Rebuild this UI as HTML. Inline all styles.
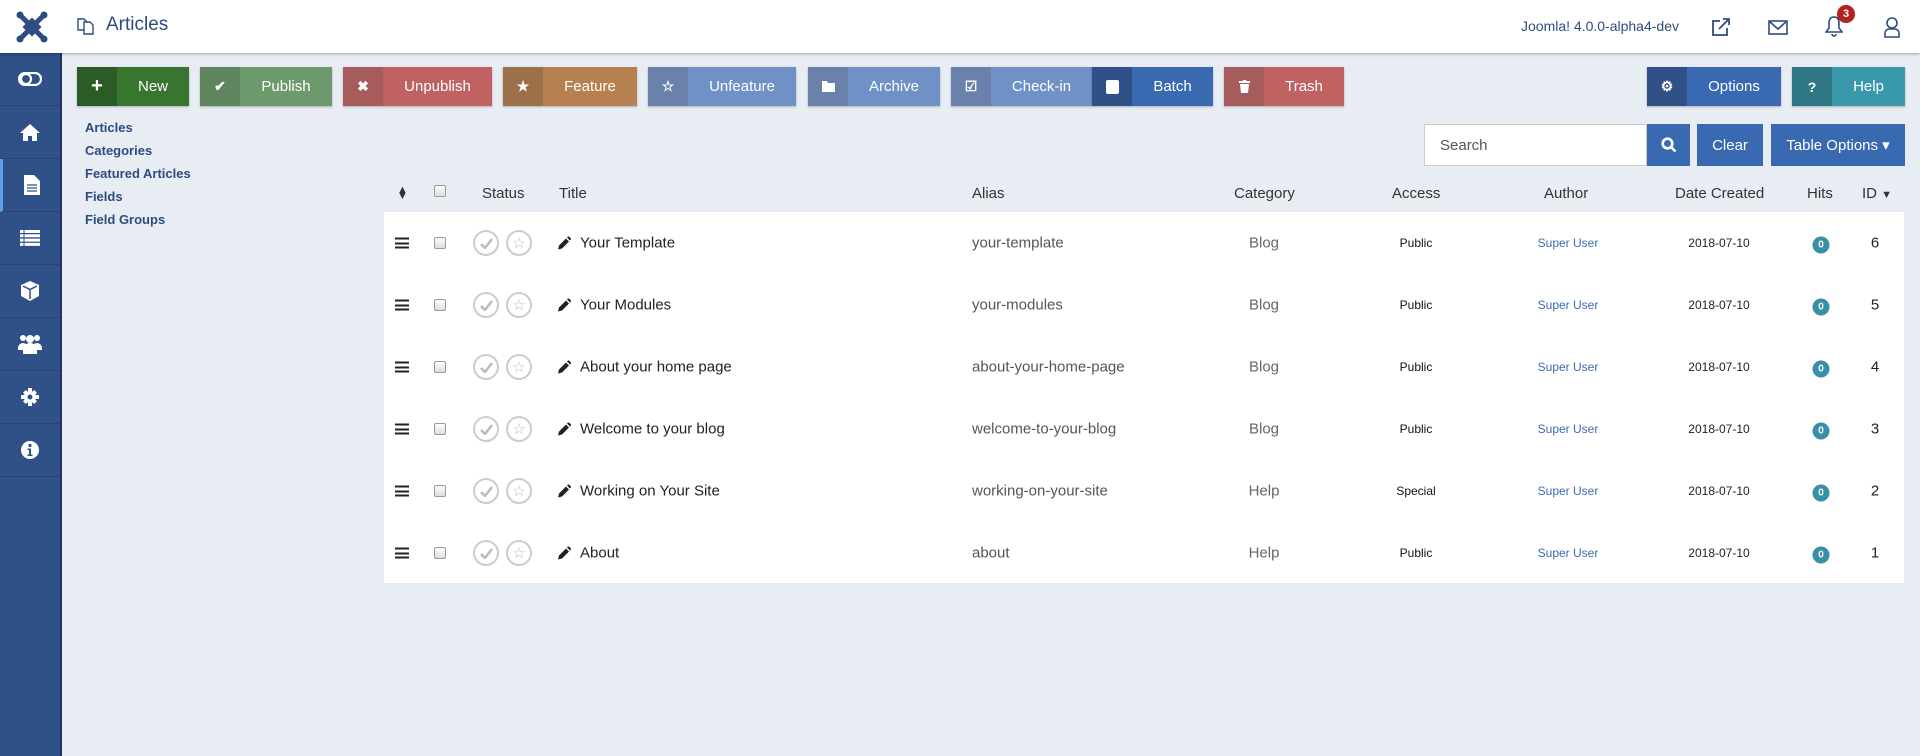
<!DOCTYPE html>
<html><head><meta charset="utf-8"><style>
*{box-sizing:border-box;margin:0;padding:0}
body{width:1920px;height:756px;overflow:hidden;background:#e8ecf3;font-family:"Liberation Sans",Arial,sans-serif;position:relative;color:#222}
.a{position:absolute}
#hdr{left:0;top:0;width:1920px;height:53px;background:#fff;box-shadow:0 1px 3px rgba(0,0,0,.3);z-index:2}
#sb{left:0;top:53px;width:62px;height:703px;background:#2f5188;border-right:2px solid #1f3560}
.si{position:absolute;left:0;width:60px;height:53px;border-bottom:1px solid #274374;display:flex;align-items:center;justify-content:center}
.btn{position:absolute;top:67px;height:39px;display:flex;color:#fff;font-size:15px;box-shadow:0 1px 2px rgba(0,0,0,.25)}
.btn .ic{width:40px;display:flex;align-items:center;justify-content:center;font-size:14px;font-weight:bold}
.btn .tx{flex:1;display:flex;align-items:center;justify-content:center}
.sub{left:85px;font-size:13px;font-weight:bold;color:#2d4d80}
.th{top:185px;font-size:15px;color:#333}
.row{position:absolute;left:384px;width:1520px;height:62px}
.c{position:absolute;top:50%;transform:translateY(-50%);white-space:nowrap}
.cc{position:absolute;top:50%;transform:translate(-50%,-50%);white-space:nowrap}
.cb{width:12px;height:12px;border:1px solid #999;border-radius:2px;background:linear-gradient(#fff,#ddd)}
.circ{width:26px;height:26px;border:2px solid #ccc;border-radius:50%;display:flex;align-items:center;justify-content:center}
.badge{width:17px;height:17px;border-radius:50%;background:#3a8fa8;color:#fff;font-size:10px;font-weight:bold;display:flex;align-items:center;justify-content:center}
</style></head><body>
<div id="hdr" class="a">
 <svg class="a" style="left:16px;top:11px" width="32" height="32" viewBox="0 0 32 32" fill="none" stroke="#2d4d80" stroke-width="5" stroke-linecap="round"><path d="M5 5 L27 27 M27 5 L5 27 M10 16 L16 10 L22 16 L16 22 Z"/><circle cx="4" cy="4" r="3.5" fill="#2d4d80" stroke="none"/><circle cx="28" cy="4" r="3.5" fill="#2d4d80" stroke="none"/><circle cx="4" cy="28" r="3.5" fill="#2d4d80" stroke="none"/><circle cx="28" cy="28" r="3.5" fill="#2d4d80" stroke="none"/></svg>
 <svg class="a" style="left:77px;top:16px" width="19" height="19" viewBox="0 0 19 19" fill="#fff" stroke="#2d4d80" stroke-width="1.4"><path d="M1 3h6l3 3v8H1z"/><path d="M7 6h6l3 3v9H7z"/></svg>
 <div class="a" style="left:106px;top:14px;font-size:19px;color:#2d4d80">Articles</div>
 <div class="a" style="left:1521px;top:18px;font-size:14px;color:#2d4d80">Joomla! 4.0.0-alpha4-dev</div>
 <svg class="a" style="left:1711px;top:17px" width="20" height="20" viewBox="0 0 20 20" fill="none" stroke="#2d4d80" stroke-width="1.8"><path d="M9 4H2v14h14v-7"/><path d="M8 12L18 2M12 2h6v6"/></svg>
 <svg class="a" style="left:1768px;top:20px" width="20" height="15" viewBox="0 0 20 15" fill="none" stroke="#2d4d80" stroke-width="1.6"><rect x="1" y="1" width="18" height="13"/><path d="M1 1l9 8 9-8"/></svg>
 <svg class="a" style="left:1825px;top:15px" width="18" height="22" viewBox="0 0 18 22" fill="none" stroke="#2d4d80" stroke-width="1.6"><path d="M9 2c-4 0-5 3-5 6v5l-3 4h16l-3-4V8c0-3-1-6-5-6zM7 19a2 2 0 004 0"/></svg>
 <div class="a" style="left:1837px;top:5px;width:18px;height:18px;border-radius:50%;background:#b22222;color:#fff;font-size:11px;font-weight:bold;text-align:center;line-height:18px">3</div>
 <svg class="a" style="left:1883px;top:16px" width="18" height="22" viewBox="0 0 18 22" fill="none" stroke="#2d4d80" stroke-width="1.6"><circle cx="9" cy="7" r="5"/><path d="M2 21v-4a4 4 0 014-4h6a4 4 0 014 4v4z"/></svg>
</div>
<div id="sb" class="a">
 <div class="si" style="top:0"><svg width="24" height="14" viewBox="0 0 24 14" fill="none" stroke="#fff" stroke-width="2.2"><rect x="1" y="1" width="22" height="12" rx="6"/><circle cx="8" cy="7" r="5"/></svg></div>
 <div class="si" style="top:53px"><svg width="20" height="18" viewBox="0 0 20 18" fill="#fff"><path d="M10 1L0 10h3v8h5v-5h4v5h5v-8h3z"/></svg></div>
 <div class="si" style="top:106px;border-left:3px solid #5aa0f0"><svg width="16" height="20" viewBox="0 0 16 20" fill="#fff"><path d="M0 0h10l6 6v14H0z"/><path d="M3 10h10M3 13h10M3 16h10" stroke="#2f5188" stroke-width="1.3"/></svg></div>
 <div class="si" style="top:159px"><svg width="20" height="16" viewBox="0 0 20 16" fill="#fff"><path d="M0 0h20v3H0zM0 4.3h20v3H0zM0 8.6h20v3H0zM0 12.9h20v3H0z"/><path d="M4 0v16" stroke="#2f5188" stroke-width="1"/></svg></div>
 <div class="si" style="top:212px"><svg width="18" height="20" viewBox="0 0 18 20" fill="#fff"><path d="M9 0l9 4v11l-9 5-9-5V4z"/><path d="M2 5l7 3.5 7-3.5M9 8.5V18" stroke="#2f5188" stroke-width="1.5" fill="none"/></svg></div>
 <div class="si" style="top:265px"><svg width="24" height="20" viewBox="0 0 24 20" fill="#fff"><circle cx="5" cy="4" r="3"/><circle cx="19" cy="4" r="3"/><circle cx="12" cy="5" r="4"/><path d="M0 14a5 5 0 0110 0v2H0zM14 14a5 5 0 0110 0v2H14z"/><path d="M5 20v-4a7 7 0 0114 0v4z"/></svg></div>
 <div class="si" style="top:318px"><svg width="18" height="18" viewBox="0 0 18 18" fill="#fff"><circle cx="9" cy="9" r="6"/><path d="M7 0h4v4H7zM7 14h4v4H7zM0 7h4v4H0zM14 7h4v4h-4zM2 4.8L4.8 2 7 4.2 4.2 7zM11 13.8L13.8 11 16 13.2 13.2 16zM11 4.2L13.2 2 16 4.8 13.8 7zM2 13.2L4.2 11 7 13.8 4.8 16z"/><circle cx="9" cy="9" r="2.5" fill="#2f5188"/></svg></div>
 <div class="si" style="top:371px"><svg width="18" height="18" viewBox="0 0 18 18"><circle cx="9" cy="9" r="9" fill="#fff"/><circle cx="9" cy="4.5" r="1.6" fill="#2f5188"/><path d="M6.5 7.5h3.5v6h1.5v1.5h-5v-1.5h1.5V9h-1.5z" fill="#2f5188"/></svg></div>
</div>

<div class="btn" style="left:77px;width:112px;background:#38752f"><div class="ic" style="background:#2c5c25;font-size:20px">+</div><div class="tx">New</div></div>
<div class="btn" style="left:200px;width:132px;background:#6c9a6c"><div class="ic" style="background:#5e855e">✔</div><div class="tx">Publish</div></div>
<div class="btn" style="left:343px;width:149px;background:#c06262"><div class="ic" style="background:#a65c5c">✖</div><div class="tx">Unpublish</div></div>
<div class="btn" style="left:503px;width:134px;background:#b6804f"><div class="ic" style="background:#9c7048">★</div><div class="tx">Feature</div></div>
<div class="btn" style="left:648px;width:148px;background:#7091c6"><div class="ic" style="background:#6a82ab">☆</div><div class="tx">Unfeature</div></div>
<div class="btn" style="left:808px;width:132px;background:#7091c6"><div class="ic" style="background:#6a82ab"><svg width="13" height="11" viewBox="0 0 13 11" fill="#fff"><path d="M0 0h5l1 2h7v9H0z"/></svg></div><div class="tx">Archive</div></div>
<div class="btn" style="left:951px;width:141px;background:#7091c6"><div class="ic" style="background:#6a82ab">☑</div><div class="tx">Check-in</div></div>
<div class="btn" style="left:1092px;width:121px;background:#3969b1"><div class="ic" style="background:#2f5188"><div style="width:13px;height:14px;background:#fff;border-radius:2px"></div></div><div class="tx">Batch</div></div>
<div class="btn" style="left:1224px;width:120px;background:#c06262"><div class="ic" style="background:#a65c5c"><svg width="11" height="13" viewBox="0 0 11 13" fill="#fff"><path d="M0 1h11v2H0zM4 0h3v1H4zM1 4h9l-1 9H2z"/></svg></div><div class="tx">Trash</div></div>
<div class="btn" style="left:1647px;width:134px;background:#3969b1"><div class="ic" style="background:#2f5188">⚙</div><div class="tx">Options</div></div>
<div class="btn" style="left:1792px;width:113px;background:#3a98ab"><div class="ic" style="background:#2e7885">?</div><div class="tx">Help</div></div>

<div class="a sub" style="top:120px">Articles</div>
<div class="a sub" style="top:143px">Categories</div>
<div class="a sub" style="top:166px">Featured Articles</div>
<div class="a sub" style="top:189px">Fields</div>
<div class="a sub" style="top:212px">Field Groups</div>

<div class="a" style="left:1424px;top:124px;width:223px;height:42px;background:#fff;border:1px solid #ccc;font-size:15px;color:#555;padding:12px 15px">Search</div>
<div class="a" style="left:1647px;top:124px;width:43px;height:42px;background:#3969b1;display:flex;align-items:center;justify-content:center"><svg width="16" height="16" viewBox="0 0 16 16" fill="none" stroke="#fff" stroke-width="2.6"><circle cx="6.5" cy="6.5" r="4.8"/><path d="M10 10l4.5 4.5"/></svg></div>
<div class="a" style="left:1697px;top:124px;width:66px;height:42px;background:#3969b1;color:#fff;font-size:15px;display:flex;align-items:center;justify-content:center">Clear</div>
<div class="a" style="left:1771px;top:124px;width:134px;height:42px;background:#3969b1;color:#fff;font-size:15px;display:flex;align-items:center;justify-content:center">Table Options ▾</div>

<div class="a th" style="left:397px;font-size:11px;top:187px;line-height:6px">▲<br>▼</div>
<div class="a cb" style="left:434px;top:185px"></div>
<div class="a th" style="left:482px">Status</div>
<div class="a th" style="left:559px">Title</div>
<div class="a th" style="left:972px">Alias</div>
<div class="a th" style="left:1234px">Category</div>
<div class="a th" style="left:1392px">Access</div>
<div class="a th" style="left:1544px">Author</div>
<div class="a th" style="left:1675px">Date Created</div>
<div class="a th" style="left:1807px">Hits</div>
<div class="a th" style="left:1862px">ID <span style="font-size:11px">▼</span></div>

<div class="a" style="left:384px;top:212px;width:1520px;height:371px;background:#fff"></div>
<div id="rows"></div>
<script>
var d=[["Your Template","your-template","Blog","Public","6"],["Your Modules","your-modules","Blog","Public","5"],["About your home page","about-your-home-page","Blog","Public","4"],["Welcome to your blog","welcome-to-your-blog","Blog","Public","3"],["Working on Your Site","working-on-your-site","Help","Special","2"],["About","about","Help","Public","1"]];
var h="";d.forEach(function(r,i){var t=212+i*62;
h+='<div class="row" style="top:'+t+'px">'+
'<div class="cc" style="left:18px;width:14px;height:11px;border-top:2px solid #222;border-bottom:2px solid #222"><div style="margin-top:2.5px;height:2px;background:#222"></div></div>'+
'<div class="cc cb" style="left:56px"></div>'+
'<div class="cc circ" style="left:102px"><svg width="13" height="11" viewBox="0 0 13 11"><path d="M1 6l4 4 7-9" fill="none" stroke="#bbb" stroke-width="2.5"/></svg></div>'+
'<div class="cc circ" style="left:135px;color:#bbb;font-size:15px">☆</div>'+
'<svg class="c" style="left:174px" width="13" height="13" viewBox="0 0 13 13"><path d="M0 13l1-4 7-7 3 3-7 7zM9 1l1.5-1.5 3 3L12 4z" fill="#222"/></svg>'+
'<div class="c" style="left:196px;font-size:15px;color:#222">'+r[0]+'</div>'+
'<div class="c" style="left:588px;font-size:15px;color:#555">'+r[1]+'</div>'+
'<div class="cc" style="left:880px;font-size:15px;color:#666">'+r[2]+'</div>'+
'<div class="cc" style="left:1032px;font-size:12px;color:#111">'+r[3]+'</div>'+
'<div class="cc" style="left:1184px;font-size:12px;color:#3d6bb3">Super User</div>'+
'<div class="cc" style="left:1335px;font-size:12px;color:#222">2018-07-10</div>'+
'<div class="cc badge" style="left:1437px;margin-top:2px">0</div>'+
'<div class="cc" style="left:1491px;font-size:15px;color:#222">'+r[4]+'</div></div>';});
document.getElementById("rows").innerHTML=h;
</script>
</body></html>
